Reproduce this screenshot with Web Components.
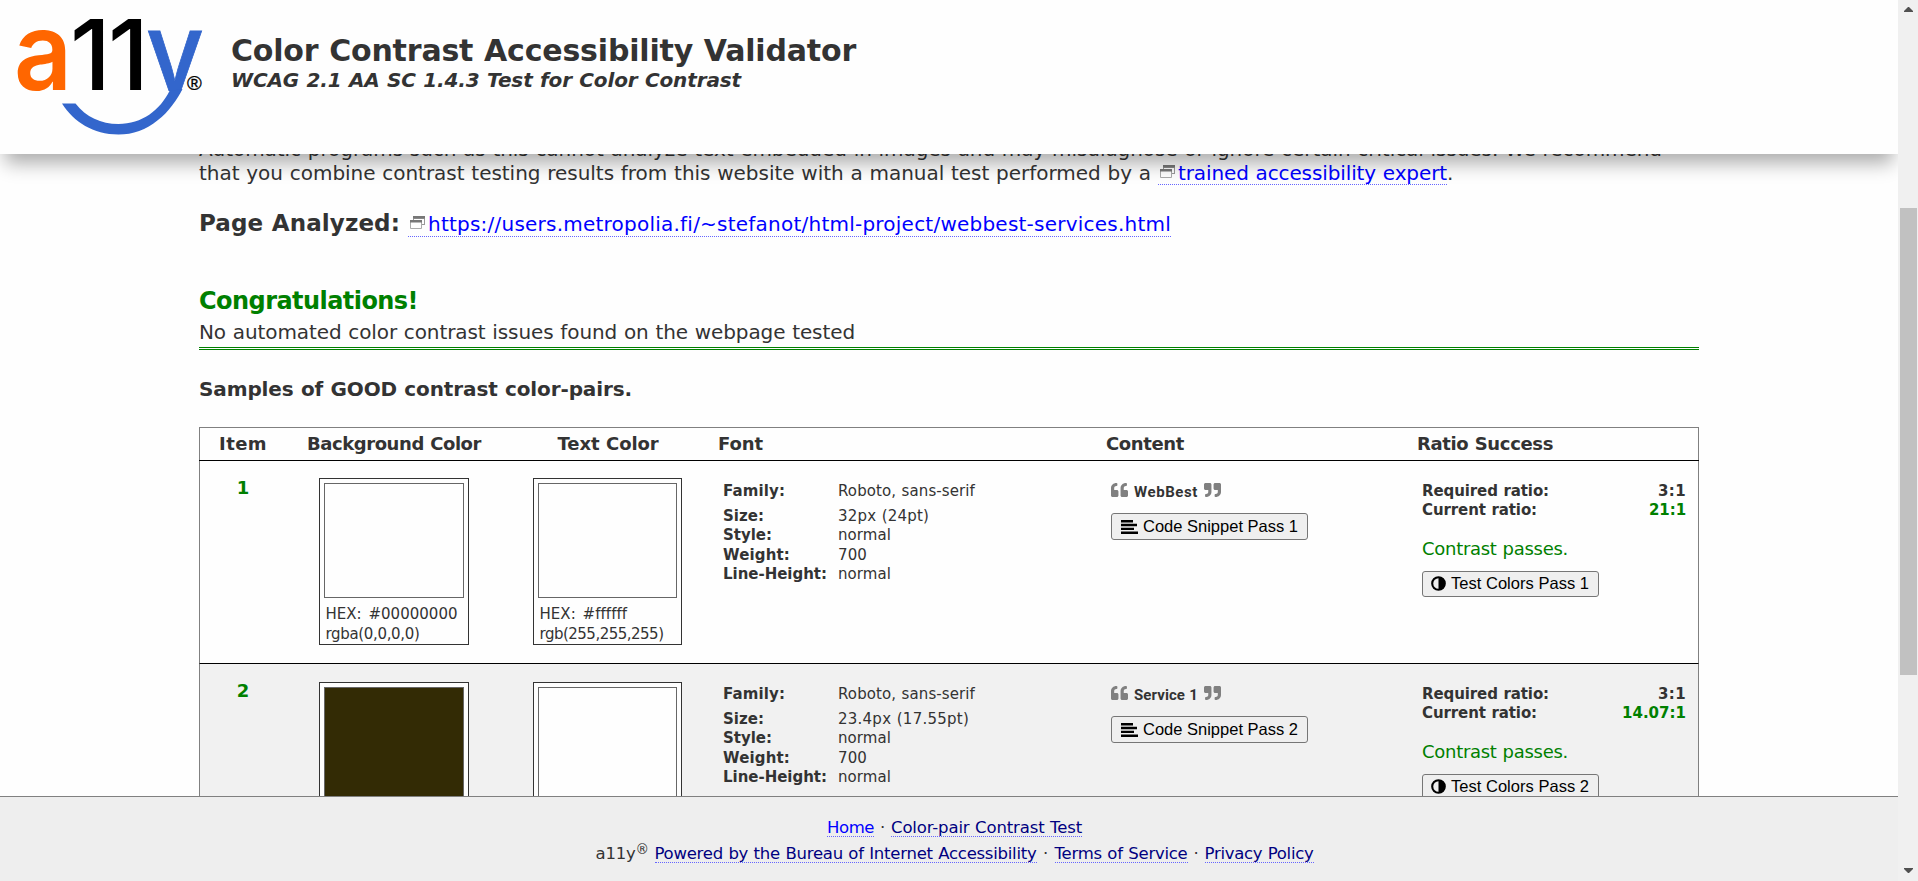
<!DOCTYPE html>
<html lang="en">
<head>
<meta charset="utf-8">
<title>Color Contrast Accessibility Validator</title>
<style>
html,body{margin:0;height:100%;overflow:hidden;background:#fefefe}
body{font-family:"DejaVu Sans",Verdana,sans-serif;color:#333;word-spacing:.5px}
</style>
</head>
<body>
<validator-app></validator-app>
<script>
const define = (name, html, after) => customElements.define(name, class extends HTMLElement {
  connectedCallback() {
    if (this.shadowRoot) return;
    const root = this.attachShadow({ mode: "open" });
    root.innerHTML = typeof html === "function" ? html(this) : html;
    if (after) after(this, root);
  }
});

define("validator-app", `
<style>
:host{display:grid;grid-template-columns:1fr 20px;height:881px;overflow:hidden}
.page{display:flex;flex-direction:column;height:881px;min-width:0;overflow:hidden}
</style>
<div class="page"><site-header></site-header><report-body></report-body><site-footer></site-footer></div>
<scroll-bar></scroll-bar>`);

define("scroll-bar", `
<style>
:host{display:flex;flex-direction:column;background:#f0f0f0;height:881px}
svg{display:block;margin-left:6px}
.thumb{height:467px;width:17px;margin:196px 0 193px 2px;background:#c1c1c1}
</style>
<svg style="margin-top:7px" width="9" height="5" viewBox="0 0 9 5"><path d="M0 5V4L4 0H5L9 4V5Z" fill="#505050"/></svg>
<div class="thumb"></div>
<svg width="9" height="5" viewBox="0 0 9 5"><path d="M0 0V1L4 5H5L9 1V0Z" fill="#505050"/></svg>`);

define("site-logo", `
<style>:host{display:block;width:231px;height:154px;flex:none}svg{display:block}</style>
<svg width="231" height="154" viewBox="0 0 231 154" role="img" aria-label="a11y logo">
<clipPath id="arm"><rect x="140" y="20" width="80" height="71"/></clipPath>
<g font-family="Inter,sans-serif">
<text x="14" y="89.5" font-size="108" font-weight="600" fill="#f60" textLength="58" lengthAdjust="spacingAndGlyphs">a</text>
<text x="70" y="90.3" font-size="98" font-weight="500" fill="#000" textLength="41" lengthAdjust="spacingAndGlyphs">1</text>
<text x="108" y="90.3" font-size="98" font-weight="500" fill="#000" textLength="41" lengthAdjust="spacingAndGlyphs">1</text>
<text x="146" y="90.5" font-size="109" font-weight="500" fill="#36c" stroke="#36c" stroke-width=".8" textLength="58" lengthAdjust="spacingAndGlyphs" clip-path="url(#arm)">y</text>
</g>
<path d="M62 103.5H75.5C86 117 101 124 118.5 124C142 124 160 110 169.5 91L182.5 89C178 98 168 113 158 120C146 130 133 134.5 118.5 134.5C93 134.5 74 122 62 103.5Z" fill="#36c"/>
<text x="187" y="90" font-family="Liberation Sans,sans-serif" font-size="20" fill="#000" stroke="#000" stroke-width=".3">®</text>
</svg>`);

define("site-header", `
<style>
:host{display:flex;flex:none;height:154px;background:#fefefe;position:relative;z-index:2;box-shadow:0 14px 18px -5px rgba(0,0,0,.33)}
h1{margin:33px 0 0;font-size:30px;line-height:36px}
p{margin:-1px 0 0;font:italic bold 20px/24px "DejaVu Sans",sans-serif}
</style>
<site-logo></site-logo>
<div><h1><fit-text w="625">Color Contrast Accessibility Validator</fit-text></h1>
<p><fit-text w="510">WCAG 2.1 AA SC 1.4.3 Test for Color Contrast</fit-text></p></div>`);

define("out-link", `
<style>
:host{display:inline-flex;align-items:baseline;border-bottom:1px dotted #66f;color:#00f;padding-left:2px}
svg{display:block;margin-right:3px;flex:none;position:relative;top:-2px}
</style>
<svg width="15" height="13" viewBox="0 0 15 13"><path d="M3 0H15V9H12V8H14V3H4V4H3Z" fill="#999"/><path d="M3 0H15V2.5H3Z" fill="#777"/><path d="M.5 4.5H11.5V12.5H.5Z" fill="#fefefe" stroke="#aaa"/><path d="M0 4H12V6.5H0Z" fill="#777"/></svg><slot></slot>`);

define("report-body", `
<style>
:host{display:block;flex:1;min-height:0;overflow:hidden}
.wrap{width:1500px;margin-left:199px}
.intro{margin-top:-17px;font-size:20px;line-height:24px}
.intro div{display:flex;align-items:baseline;height:24px;white-space:pre}
.intro out-link{line-height:22px;margin-left:7px}
.url{display:flex;align-items:baseline;margin-top:23px;height:30px;font-size:20px;line-height:24px}
.url b{font-size:23px;line-height:30px;width:209px}
h2{margin:48px 0 0;font-size:24px;line-height:30px;color:green}
.result{margin-top:4px;font-size:20px;line-height:24px;padding-bottom:3px;border-bottom:3px double green}
h3{margin:27px 0 26px;font-size:20px;line-height:24px}
</style>
<div class="wrap">
<div class="intro"><div><fit-text w="1463">Automatic programs such as this cannot analyze text embedded in images and may misdiagnose or ignore certain critical issues. We recommend</fit-text></div>
<div><fit-text w="952">that you combine contrast testing results from this website with a manual test performed by a</fit-text><out-link><fit-text w="269">trained accessibility expert</fit-text></out-link>.</div></div>
<div class="url"><b><fit-text w="201">Page Analyzed:</fit-text></b><out-link><fit-text w="743">https://users.metropolia.fi/~stefanot/html-project/webbest-services.html</fit-text></out-link></div>
<h2><fit-text w="219">Congratulations!</fit-text></h2>
<div class="result"><fit-text w="656">No automated color contrast issues found on the webpage tested</fit-text></div>
<h3><fit-text w="433">Samples of GOOD contrast color-pairs.</fit-text></h3>
<pair-table></pair-table>
</div>`);

define("pair-table", `
<style>
:host{display:block;border:1px solid gray;--cols:86px 216px 212px 389px 311px 284px}
.head{display:grid;grid-template-columns:var(--cols);height:32px;font-weight:bold;font-size:18px;line-height:32px;margin:0 -1px;padding:0 1px;border-bottom:1px solid #000}
.c{text-align:center}
.l{padding-left:3px}
</style>
<div class="head"><div class="c"><fit-text w="48">Item</fit-text></div><div class="c"><fit-text w="174">Background Color</fit-text></div><div class="c"><fit-text w="101">Text Color</fit-text></div><div class="l" style="padding-left:4px"><fit-text w="45">Font</fit-text></div><div class="l"><fit-text w="78">Content</fit-text></div><div class="l"><fit-text w="136">Ratio Success</fit-text></div></div>
<pair-row n="1" bg="#fefefe" hex="#00000000" hexw="132" rgb="rgba(0,0,0,0)" rgbw="94" size="32px (24pt)" sizew="91" content="WebBest" cw="65" ratio="21:1" rw="37"></pair-row>
<pair-row n="2" bg="#332b05" hex="#332b05" hexw="118" rgb="rgb(51,43,5)" rgbw="95" size="23.4px (17.55pt)" sizew="131" content="Service 1" cw="65" ratio="14.07:1" rw="64" style="background:#f1f1f1;--sw:18px"></pair-row>`);

define("color-swatch", e => `
<style>
:host{display:block;box-sizing:border-box;height:167px;border:1px solid #333;background:#fefefe;padding:4px;font-size:15px;line-height:20px;word-spacing:2px}
.chip{height:113px;border:1px solid #666;margin-bottom:6px;background:${e.getAttribute("color")}}
.t{padding-left:1.5px;height:20px}
</style>
<div class="chip"></div><div class="t"><fit-text w="${e.getAttribute("hexw")}">HEX: ${e.getAttribute("hex")}</fit-text></div><div class="t"><fit-text w="${e.getAttribute("rgbw")}">${e.getAttribute("rgb")}</fit-text></div>`);

define("tool-button", `
<style>
:host{display:block}
button{display:flex;align-items:center;box-sizing:border-box;width:100%;height:100%;margin:0;padding:0 0 0 9px;border:1px solid #767676;border-radius:3px;background:#efefef;color:#000;font:16.5px "Liberation Sans",Arial,sans-serif;text-align:left}
</style>
<button><slot></slot></button>`);

const quote = '<path fill="#808080" d="M464 256h-80v-64c0-35.3 28.7-64 64-64h8c13.3 0 24-10.7 24-24V56c0-13.3-10.7-24-24-24h-8c-88.4 0-160 71.6-160 160v240c0 26.5 21.5 48 48 48h128c26.5 0 48-21.5 48-48V304c0-26.5-21.5-48-48-48zm-288 0H96v-64c0-35.3 28.7-64 64-64h8c13.3 0 24-10.7 24-24V56c0-13.3-10.7-24-24-24h-8C71.6 32 0 103.6 0 192v240c0 26.5 21.5 48 48 48h128c26.5 0 48-21.5 48-48V304c0-26.5-21.5-48-48-48z"/>';
const quoteSvg = style => `<svg width="17" height="14" viewBox="0 32 512 448" preserveAspectRatio="none" style="${style}">${quote}</svg>`;

define("pair-row", e => { const a = k => e.getAttribute(k); return `
<style>
:host{display:grid;grid-template-columns:86px 216px 212px 389px 311px 284px;height:202px;border-bottom:1px solid #000;margin:0 -1px;font-size:15px;line-height:19px;border-left:1px solid gray;border-right:1px solid gray}
svg{display:block;flex:none}
.n{padding-top:16px;text-align:center;color:green;font-weight:bold;font-size:18px;line-height:22px}
.s1{padding:var(--sw,17px) 0 0 33px;width:150px}
.s2{padding:var(--sw,17px) 0 0 31px;width:149px}
.f{display:grid;grid-template-columns:115px 1fr;grid-template-rows:25px 19px 20px 19px 19px;padding:21px 0 0 9px;align-content:start}
.c{padding:22px 0 0 8px}
.q{display:flex;align-items:baseline;height:14px;gap:6px;font:bold 15px/14px Roboto,sans-serif}
.c tool-button{width:197px;height:27px;margin-top:16px}
.r{padding:21px 12px 0 8px}
.k{display:flex;justify-content:space-between;font-weight:bold}
.ok{margin:18px 0 11px;font-size:18px;line-height:22px;color:green}
.r tool-button{width:177px;height:26px}
</style>
<div class="n">${a("n")}</div>
<div class="s1"><color-swatch color="${a("bg")}" hex="${a("hex")}" hexw="${a("hexw")}" rgb="${a("rgb")}" rgbw="${a("rgbw")}"></color-swatch></div>
<div class="s2"><color-swatch color="#fefefe" hex="#ffffff" hexw="87" rgb="rgb(255,255,255)" rgbw="124"></color-swatch></div>
<div class="f">
<b><fit-text w="62">Family:</fit-text></b><span><fit-text w="137">Roboto, sans-serif</fit-text></span>
<b><fit-text w="41">Size:</fit-text></b><span><fit-text w="${a("sizew")}">${a("size")}</fit-text></span>
<b><fit-text w="49">Style:</fit-text></b><span><fit-text w="53">normal</fit-text></span>
<b><fit-text w="67">Weight:</fit-text></b><span><fit-text w="29">700</fit-text></span>
<b><fit-text w="104">Line-Height:</fit-text></b><span><fit-text w="53">normal</fit-text></span>
</div>
<div class="c"><div class="q">${quoteSvg("")}<fit-text w="64">${a("content")}</fit-text>${quoteSvg("transform:rotate(180deg)")}</div>
<tool-button><svg style="display:block;margin-right:5px;flex:none" width="17" height="14" viewBox="0 0 17 14"><path d="M0 0H12V2.4H0ZM0 3.8H16V6.2H0ZM0 7.7H13V10.1H0ZM0 11.5H17V14H0Z"/></svg><fit-text w="155">Code Snippet Pass ${a("n")}</fit-text></tool-button></div>
<div class="r"><div class="k"><fit-text w="127">Required ratio:</fit-text><fit-text w="28">3:1</fit-text></div>
<div class="k"><fit-text w="115">Current ratio:</fit-text><fit-text style="color:green" w="${a("rw")}">${a("ratio")}</fit-text></div>
<div class="ok"><fit-text w="146">Contrast passes.</fit-text></div>
<tool-button><svg style="display:block;margin:-2px 5px 0 -1px;flex:none" width="15" height="15" viewBox="0 0 15 15"><circle cx="7.5" cy="7.5" r="6.3" fill="none" stroke="#000" stroke-width="2.1"/><path d="M7.5 1a6.5 6.5 0 0 1 0 13Z"/></svg><fit-text style="position:relative;top:-.5px" w="138">Test Colors Pass ${a("n")}</fit-text></tool-button></div>`; });

define("site-footer", `
<style>
:host{display:block;flex:none;box-sizing:border-box;height:85px;border-top:1px solid gray;background:#eee;position:relative;z-index:1;font-size:16.5px;padding-top:19px}
.row{display:flex;align-items:baseline;height:26px;line-height:24px}
.row i{font-style:normal;width:18px;text-align:center}
a{display:block;line-height:17px;border-bottom:1px dotted #66f;color:navy}
sup{font-size:13.5px;line-height:0;vertical-align:baseline;position:relative;top:-5px;width:19px}
</style>
<div class="row" style="padding-left:827px"><a style="color:#00f"><fit-text w="47">Home</fit-text></a><i style="width:17px">·</i><a><fit-text w="191">Color-pair Contrast Test</fit-text></a></div>
<div class="row" style="padding-left:595.5px"><fit-text w="40">a11y</fit-text><sup>®</sup><a><fit-text w="382">Powered by the Bureau of Internet Accessibility</fit-text></a><i>·</i><a><fit-text w="133">Terms of Service</fit-text></a><i style="width:17px">·</i><a><fit-text w="109">Privacy Policy</fit-text></a></div>`);

/* Spreads its text evenly over the width given in its "w" attribute. */
define("fit-text", `<style>:host{display:inline-block;white-space:pre}</style><slot></slot>`, el => {
  const want = +el.getAttribute("w");
  const range = document.createRange();
  range.selectNodeContents(el);
  const natural = range.getBoundingClientRect().width;
  el.style.letterSpacing = ((want - natural) / el.textContent.length).toFixed(3) + "px";
  el.style.width = want + "px";
});
</script>
</body>
</html>
